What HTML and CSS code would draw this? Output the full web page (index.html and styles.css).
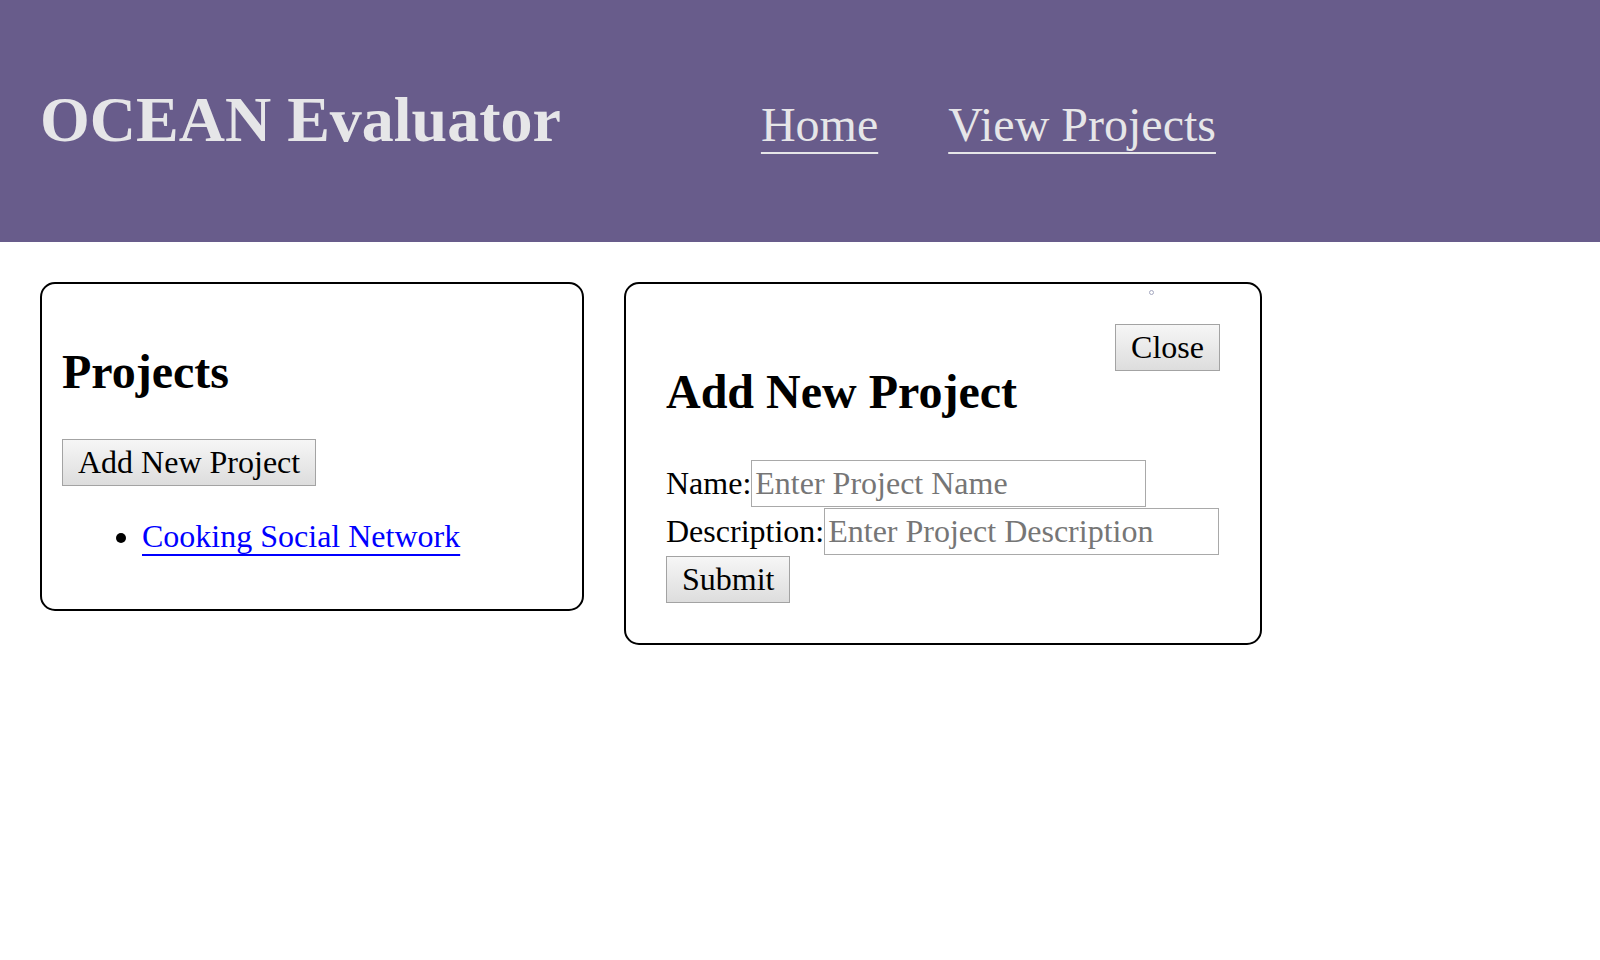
FILE: index.html
```html
<!DOCTYPE html>
<html lang="en">
<head>
<meta charset="utf-8">
<title>OCEAN Evaluator</title>
<link rel="stylesheet" href="styles.css">
</head>
<body>
<header class="topbar">
  <h1 class="brand">OCEAN Evaluator</h1>
  <nav class="nav">
    <a class="nav-link" href="#">Home</a>
    <a class="nav-link" href="#">View Projects</a>
  </nav>
</header>
<main class="content">
  <section class="card card-projects">
    <h2 class="card-title">Projects</h2>
    <div><button class="btn" type="button">Add New Project</button></div>
    <ul class="project-list">
      <li><a class="project-link" href="#">Cooking Social Network</a></li>
    </ul>
  </section>
  <section class="card card-form">
    <span class="dot"></span>
    <div class="close-wrap"><button class="btn" type="button">Close</button></div>
    <h2 class="card-title">Add New Project</h2>
    <form class="form">
      <div class="row"><label class="label">Name:</label><input class="field" type="text" placeholder="Enter Project Name"></div>
      <div class="row"><label class="label">Description:</label><input class="field" type="text" placeholder="Enter Project Description"></div>
      <div class="row"><button class="btn" type="button">Submit</button></div>
    </form>
  </section>
</main>
</body>
</html>
```
FILE: styles.css
```css
* { box-sizing: border-box; }
html, body {
  margin: 0;
  padding: 0;
  background: #ffffff;
}
body {
  font-family: "Liberation Serif", "Times New Roman", serif;
  font-size: 32px;
  color: #000;
}
.topbar {
  display: flex;
  align-items: baseline;
  height: 242px;
  padding: 83px 40px 0 40px;
  background: #685c8b;
}
.brand {
  margin: 0;
  font-size: 64px;
  font-weight: bold;
  color: #e6e6e8;
}
.nav {
  display: flex;
  gap: 70px;
  margin-left: 200px;
}
.nav-link {
  font-size: 48px;
  color: #e6e6e8;
  text-decoration: underline;
  text-decoration-thickness: 2px;
  text-underline-offset: 11px;
}
.content {
  display: flex;
  align-items: flex-start;
  gap: 40px;
  padding: 40px;
}
.card {
  position: relative;
  border: 2px solid #000;
  border-radius: 15px;
  background: #fff;
}
.card-projects {
  width: 544px;
  padding: 20px 20px 22px 20px;
}
.card-form {
  width: 638px;
  padding: 40px 40px 40px 40px;
}
.card-title {
  font-size: 48px;
  font-weight: bold;
  margin: 40px 0;
}
.btn {
  font-family: "Liberation Serif", "Times New Roman", serif;
  font-size: 32px;
  line-height: normal;
  height: 47px;
  color: #000;
  padding: 4px 15px;
  margin: 0;
  border: 1px solid #a3a3a3;
  border-radius: 0;
  background: linear-gradient(#f6f6f6, #dddddd);
}
.project-list {
  margin: 32px 0;
  padding-left: 80px;
}
.project-link {
  color: #0000ff;
  text-decoration: underline;
  text-decoration-thickness: 2px;
  text-underline-offset: 7px;
}
.close-wrap {
  float: right;
}
.dot {
  position: absolute;
  left: 523px;
  top: 6px;
  width: 5px;
  height: 5px;
  border: 1px solid #a4a8c0;
  border-radius: 50%;
}
.form {
  margin: 0;
  padding-top: 1px;
}
.row {
  display: flex;
  align-items: center;
}
.row + .row {
  margin-top: 1px;
}
.label {
  font-size: 32px;
}
.field {
  width: 395px;
  height: 47px;
  padding: 4px 3px;
  font-family: "Liberation Serif", "Times New Roman", serif;
  font-size: 32px;
  border: 1px solid #a9a9a9;
  border-radius: 0;
  color: #000;
}
.field::placeholder {
  color: #767676;
}
```
